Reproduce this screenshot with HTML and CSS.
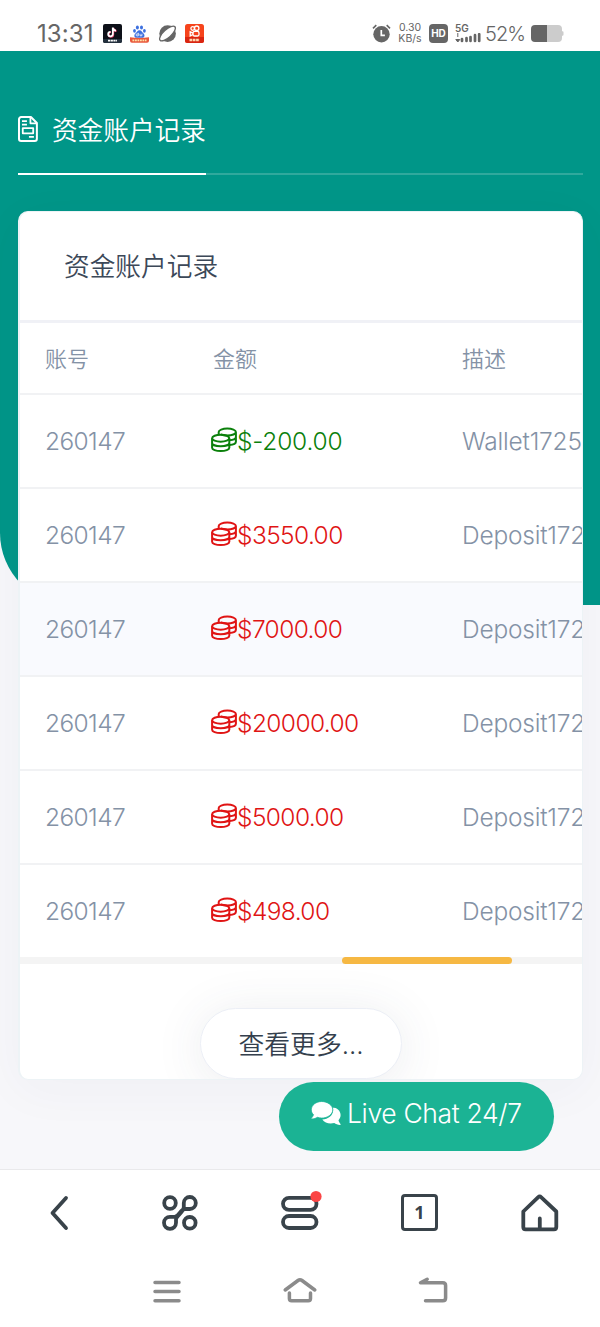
FILE: index.html
```html
<!doctype html>
<html lang="zh">
  <head>
    <meta charset="utf-8">
    <meta name="viewport" content="width=device-width, initial-scale=1">
    <title>资金账户记录</title>
    <link rel="stylesheet" href="styles.css">
  </head>
  <body>
    <!-- icons used more than once -->
    <svg class="defs" width="0" height="0">
      <symbol id="coins" viewBox="0 0 26 26">
        <g fill="none" stroke="currentColor" stroke-width="2">
          <ellipse cx="9.700" cy="11.200" rx="8.600" ry="3.500"/>
          <path d="M1.100 11.200v9.500c0 1.900 3.800 3.400 8.600 3.400s8.600-1.500 8.600-3.400v-9.500M1.100 15.900c0 1.900 3.800 3.300 8.600 3.300s8.600-1.400 8.600-3.300"/>
          <path d="M7.700 7.500V5c0-1.800 3.700-3.400 8.600-3.400s8.600 1.600 8.600 3.400c0 1.900-3.700 3.500-8.600 3.500-2.500 0-4.900-.4-6.500-1.200M24.900 5v9.800c0 1.600-2.800 3-6.600 3.300M24.900 9.900c0 1.600-2.800 3-6.600 3.300"/>
        </g>
      </symbol>
    </svg>

    <div class="status">
      <div class="status-left">
        <span class="clock">13:31</span>
        <svg class="app" viewBox="0 0 19 19">
          <rect width="19" height="19" rx="2" fill="#0d1018"/>
          <path d="M10.300 4v6.500a2.300 2.300 0 1 1-2.300-2.300M10.300 4c.3 1.900 1.500 2.900 3.200 3" fill="none" stroke="#ec3a66" stroke-width="1.800"/>
          <path d="M9.800 3.600v6.500a2.300 2.300 0 1 1-2.300-2.300M9.800 3.600c.3 1.900 1.500 2.900 3.200 3" fill="none" stroke="#fff" stroke-width="1.800"/>
          <path d="M0 15h19v2a2 2 0 0 1-2 2H2a2 2 0 0 1-2-2z" fill="#23303d"/>
          <path d="M5 16.700h9" stroke="#fff" stroke-width="1.800" stroke-dasharray="2.200 .5"/>
        </svg>
        <svg class="app" viewBox="0 0 19 19">
          <g fill="#3d70df">
            <ellipse cx="7.400" cy="3.400" rx="1.500" ry="2"/><ellipse cx="11.500" cy="3.400" rx="1.500" ry="2"/>
            <ellipse cx="4.500" cy="6.800" rx="1.400" ry="1.900"/><ellipse cx="14.400" cy="6.800" rx="1.400" ry="1.900"/>
            <path d="M9.500 6.200c2.200 0 2.600 2.200 4 3.300 1.600 1.300 1.300 4.300-1.200 4.300H6.500c-2.500 0-2.700-3-1.100-4.300 1.500-1.100 1.900-3.300 4.100-3.300z"/>
          </g>
          <path d="M8.300 8.800v3.100H7a.8.8 0 0 1 0-1.900h1.300M10 9.800v2h1.900v-2" fill="none" stroke="#fff" stroke-width=".8"/>
          <path d="M0 13.200q9.500 1.600 19 0v3.600a2 2 0 0 1-2 2H2a2 2 0 0 1-2-2z" fill="#e9583c"/>
          <path d="M2.500 16.400h14" stroke="#ffe2a8" stroke-width="1.800" stroke-dasharray="1.800 .7"/>
        </svg>
        <svg class="app" viewBox="0 0 19 19">
          <circle cx="9.600" cy="9.600" r="8.300" fill="#666"/>
          <ellipse cx="9.500" cy="9.500" rx="10" ry="3.900" fill="#fff" stroke="#666" stroke-width="1.300" transform="rotate(-42 9.500 9.500)"/>
        </svg>
        <svg class="app" viewBox="0 0 19 19">
          <rect width="19" height="19" rx="2.500" fill="#f6441c"/>
          <g fill="none" stroke="#fff" stroke-width="1.300">
            <circle cx="7.700" cy="4.500" r="1.800"/><circle cx="11.700" cy="4.200" r="2.200"/>
            <rect x="8" y="7.400" width="6" height="4.600" rx="1.500"/><path d="M8 9.200 5.200 7.800v4.100L8 10.500"/>
          </g>
          <path d="M0 13h19v3.500a2.500 2.500 0 0 1-2.500 2.500h-14A2.500 2.500 0 0 1 0 16.500z" fill="#d92511"/>
          <path d="M4.500 15.900h10" stroke="#ffd9b0" stroke-width="2.500" stroke-dasharray="2.700 .6"/>
        </svg>
      </div>
      <div class="status-right">
        <svg width="19" height="19" viewBox="0 0 19 19">
          <circle cx="9.500" cy="10.300" r="8.200" fill="#666"/>
          <path d="M1 4.300 4.300 1.200M18 4.300l-3.300-3.100" stroke="#666" stroke-width="1.600"/>
          <path d="M9.300 6v5.300h3.600" fill="none" stroke="#fff" stroke-width="1.700"/>
        </svg>
        <div class="speed"><span>0.30</span><span>KB/s</span></div>
        <span class="hd">HD</span>
        <div class="signal">
          <span>5G</span>
          <svg width="26" height="10" viewBox="0 0 26 10">
            <path d="M2.800 0v4M.8 6.500h4L2.800 9z" fill="#666" stroke="#666"/>
            <path d="M7 8V6M11.500 8V5M15.500 8V4M20 8V2.200M24.200 8V1.200" stroke="#666" stroke-width="2.700" stroke-linecap="round"/>
          </svg>
        </div>
        <span class="percent">52%</span>
        <svg width="33" height="17" viewBox="0 0 33 17">
          <path d="M16 0h11a4 4 0 0 1 4 4v2.200h.5a1 1 0 0 1 1 1v2.600a1 1 0 0 1-1 1H31V13a4 4 0 0 1-4 4H16z" fill="#ccc"/>
          <path d="M4 0h12v17H4a4 4 0 0 1-4-4V4a4 4 0 0 1 4-4z" fill="#666"/>
        </svg>
      </div>
    </div>

    <main class="page">
      <div class="hero"></div>
      <div class="content">
        <div class="tabs">
          <div class="tab">
            <svg width="20" height="26" viewBox="0 0 20 26" fill="none" stroke="currentColor" stroke-width="2" stroke-linejoin="round">
              <path d="M3.300 1h9.700L19 7v15.800a2.200 2.200 0 0 1-2.200 2.200H3.200A2.200 2.200 0 0 1 1 22.800V3.200A2.200 2.200 0 0 1 3.300 1z"/>
              <path d="M12.500 1.500v5.800H19M4 5h5M4 8.500h5M11 21h5" stroke-width="1.800"/>
              <path d="M4.800 12.100h10.500v5.300H4.800z" stroke-width="1.800"/>
            </svg>
            <span>资金账户记录</span>
          </div>
        </div>

        <section class="card">
          <h3 class="card-title">资金账户记录</h3>
          <div class="table">
            <div class="row head"><span>账号</span><span>金额</span><span>描述</span></div>
            <div class="row"><span>260147</span><span class="amount out"><svg><use href="#coins"/></svg>$-200.00</span><span>Wallet1725</span></div>
            <div class="row"><span>260147</span><span class="amount"><svg><use href="#coins"/></svg>$3550.00</span><span>Deposit172</span></div>
            <div class="row hover"><span>260147</span><span class="amount"><svg><use href="#coins"/></svg>$7000.00</span><span>Deposit172</span></div>
            <div class="row"><span>260147</span><span class="amount"><svg><use href="#coins"/></svg>$20000.00</span><span>Deposit172</span></div>
            <div class="row"><span>260147</span><span class="amount"><svg><use href="#coins"/></svg>$5000.00</span><span>Deposit172</span></div>
            <div class="row"><span>260147</span><span class="amount"><svg><use href="#coins"/></svg>$498.00</span><span>Deposit172</span></div>
          </div>
          <div class="scroll"><div class="thumb"></div></div>
          <div class="more"><button type="button">查看更多...</button></div>
        </section>

        <div class="chat">
          <svg width="30" height="24" viewBox="0 0 30 24">
            <path d="M21 6.500c5.200 0 8.600 3.400 8.600 7.600 0 2-.8 3.700-2.100 5.100.3 1.500 1.200 2.800 2 3.700.3.400 0 1-.5 1-2.300 0-4.300-.9-5.700-1.800-4.700 1.200-9.600.1-12-3.600 5.800-.3 10.800-3.800 10.800-9.500 0-.9-.3-1.700-.6-2.500z" fill="#fff"/>
            <path d="M10.700.5C16.500.5 21.800 4.200 21.800 8.800s-5.300 8.300-11.100 8.300c-1.600 0-3.100-.3-4.400-.8C4.900 17.300 3 18 .9 18c-.5 0-.8-.6-.4-1 .8-.9 1.600-2 2-3.300C1 12.300.3 10.600.3 8.800.3 4.200 4.900.5 10.700.5z" fill="#fff" stroke="#1bb394" stroke-width=".8"/>
          </svg>
          <span>Live Chat 24/7</span>
        </div>
      </div>
    </main>

    <nav class="browser-bar">
      <svg viewBox="0 0 40 40"><path d="M26 5 12.500 20 26 35" class="line"/></svg>
      <svg viewBox="0 0 40 40" class="line">
        <circle cx="10" cy="10" r="5.800"/><circle cx="29.800" cy="29.800" r="5.800"/>
        <path d="M25 16h4.800a6 6 0 1 0-6-6v4c0 5-7.800 9.500-7.800 12.500v3.300a6 6 0 1 1-6-6h4.500c5 0 5.500-7.800 10.500-7.800z"/>
      </svg>
      <svg viewBox="0 0 40 40">
        <g class="line"><rect x="3" y="4.800" width="33.500" height="12" rx="6"/><rect x="3" y="23" width="33.500" height="12" rx="6"/></g>
        <circle cx="36" cy="3.500" r="5.600" fill="#fb4545"/>
      </svg>
      <div class="window-count">1</div>
      <svg viewBox="0 0 40 40" class="line"><path d="M3.300 18.500 18 4.300q1.700-1.500 3.300 0L36.300 18.500V34q0 2.300-2.300 2.300H5.600q-2.300 0-2.300-2.300zM19.800 25.500v10"/></svg>
    </nav>
    <nav class="system-bar">
      <svg viewBox="0 0 36 28"><path d="M6 3.500h24M6 12.600h24M6 21.800h24"/></svg>
      <svg viewBox="0 0 36 28"><path d="M3.200 11 16 1.500q2-1.500 4 0L32.800 11M7.400 14v5.500q0 2.300 2.300 2.300h16.500q2.300 0 2.300-2.300V14"/></svg>
      <svg viewBox="0 0 36 28"><path d="M12.200.3 5.500 3.700h22.300q2.800 0 2.800 2.800V19q0 2.800-2.800 2.800H10.500"/></svg>
    </nav>
  </body>
</html>
```
FILE: styles.css
```css
* {
  box-sizing: border-box;
}

body {
  margin: 0;
  width: 600px;
  height: 1327px;
  overflow: hidden;
  background: #f7f7fa;
  font-family: Inter, "Noto Sans CJK SC", sans-serif;
  font-weight: 350;
  color: #8492a6;
}

.defs {
  position: absolute;
}

/* phone status bar */
.status {
  height: 51px;
  padding: 16px 36px 0 37px;
  display: flex;
  justify-content: space-between;
  align-items: flex-start;
  background: #fff;
  color: #666;
}

.status-left,
.status-right {
  display: flex;
  align-items: center;
  height: 34px;
}

.status-left {
  gap: 8.5px;
}

.clock {
  width: 57px;
  font-size: 24px;
  font-weight: 400;
  letter-spacing: 0.1px;
  white-space: nowrap;
}

.app {
  width: 19px;
  height: 19px;
}

.speed {
  width: 24px;
  margin-left: 7px;
  font-size: 10.5px;
  font-weight: 400;
  line-height: 11px;
  text-align: center;
}

.speed span {
  display: block;
}

.hd {
  width: 19px;
  height: 19px;
  margin-left: 7px;
  border-radius: 4px;
  background: #666;
  color: #fff;
  font-size: 10px;
  font-weight: 700;
  line-height: 19px;
  text-align: center;
}

.signal {
  width: 26px;
  margin-left: 7px;
  font-size: 10px;
  font-weight: 600;
  line-height: 9px;
}

.signal span,
.signal svg {
  display: block;
}

.percent {
  width: 39px;
  margin: 2px 7px 0 4px;
  font-size: 20px;
  letter-spacing: -0.9px;
}

/* page */
.page {
  height: 1118px;
}

.hero {
  height: 554px;
  margin-bottom: -554px;
  background: #009688;
  border-bottom-left-radius: 72px;
}

.content {
  position: relative;
  padding: 53px 17px 0 18px;
}

.tabs {
  height: 71px;
  display: flex;
  border-bottom: 2px solid #30a99d;
}

.tab {
  height: 71px;
  width: 188px;
  padding-bottom: 20px;
  display: flex;
  align-items: center;
  gap: 14px;
  border-bottom: 2px solid #fff;
  color: #fff;
  font-size: 25.7px;
  white-space: nowrap;
}

.tab span {
  margin-top: -1px;
}

.card {
  height: 869px;
  margin-top: 36px;
  overflow: hidden;
  border: 1px solid #edf3f6;
  border-width: 1px 1px 1px 2px;
  border-radius: 10px;
  background: #fff;
  box-shadow: 0 10px 50px rgba(50, 50, 93, 0.04);
}

.card-title {
  height: 111px;
  margin: 0;
  padding-left: 44px;
  border-bottom: 3px solid #f0f1f6;
  color: #3c4858;
  font-size: 25.7px;
  font-weight: 350;
  line-height: 109px;
}

.row {
  height: 94px;
  padding-left: 25px;
  display: grid;
  grid-template-columns: 168px 249px 1fr;
  align-items: center;
  border-top: 2px solid #f1f2f4;
  font-size: 24.5px;
  letter-spacing: -0.6px;
  white-space: nowrap;
}

.row.head {
  height: 70px;
  padding-bottom: 3px;
  border-top: 0;
  font-size: 22px;
  letter-spacing: 0;
}

.row.hover {
  background: #f9fafe;
}

.row > :last-child {
  overflow: hidden;
}

.row:not(.head) > :last-child {
  letter-spacing: -0.2px;
}

.amount {
  display: flex;
  align-items: center;
  color: #e01414;
}

.amount.out {
  color: #0b800b;
  letter-spacing: -0.2px;
}

.amount svg {
  width: 26px;
  height: 26px;
  margin: -3px 0 0 -2px;
}

.scroll {
  height: 7px;
  padding-left: 322px;
  background: #f4f4f4;
}

.thumb {
  width: 170px;
  height: 7px;
  border-radius: 4px;
  background: #f6b843;
}

.more {
  padding-top: 44px;
  display: flex;
  justify-content: center;
}

.more button {
  width: 202px;
  height: 71px;
  padding: 0 0 3px;
  border: 1px solid #eceff6;
  border-radius: 36px;
  background: #fff;
  box-shadow: 0 5px 50px rgba(60, 72, 88, 0.1);
  color: #343f4d;
  font: 350 25.8px Inter, "Noto Sans CJK SC", sans-serif;
}

.chat {
  width: 275px;
  height: 69px;
  margin: 2px 0 0 261px;
  padding: 0 0 7px 32px;
  display: flex;
  align-items: center;
  gap: 6px;
  border-radius: 35px;
  background: #1bb394;
  color: #fff;
  font-size: 26.5px;
  letter-spacing: -0.35px;
  white-space: nowrap;
}

/* browser and system navigation */
.browser-bar {
  position: relative;
  height: 88px;
  padding-bottom: 2px;
  display: grid;
  grid-template-columns: repeat(5, 120px);
  place-items: center;
  border-top: 1px solid #e9e9eb;
  background: #fff;
}

.browser-bar svg {
  width: 40px;
  height: 40px;
  overflow: visible;
}

.line {
  fill: none;
  stroke: #39434a;
  stroke-width: 3.8;
  stroke-linecap: round;
  stroke-linejoin: round;
}

.window-count {
  width: 37px;
  height: 37px;
  margin-right: 1px;
  border: 3.5px solid #39434a;
  border-radius: 4px;
  color: #39434a;
  font-family: "Open Sans", sans-serif;
  font-size: 18px;
  font-weight: 700;
  line-height: 30px;
  text-align: center;
}

.system-bar {
  position: relative;
  height: 70px;
  padding: 22px 0 0 149px;
  display: flex;
  gap: 97px;
  background: #fff;
}

.system-bar svg {
  width: 36px;
  height: 28px;
  overflow: visible;
  fill: none;
  stroke: #8b8b8b;
  stroke-width: 3.5;
  stroke-linecap: round;
  stroke-linejoin: round;
}
```
